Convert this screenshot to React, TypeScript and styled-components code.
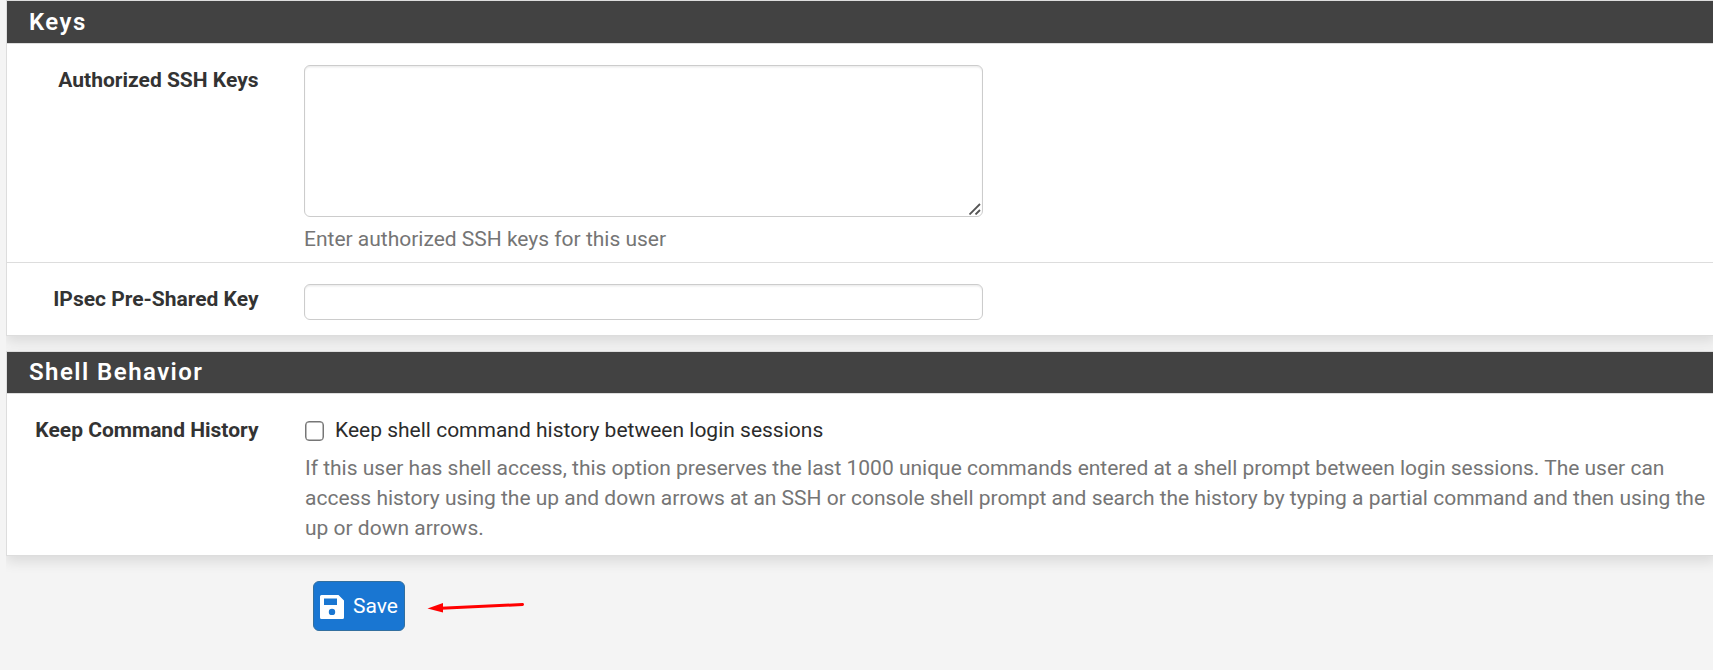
import React from "react";
import styled, { createGlobalStyle } from "styled-components";

const GlobalStyle = createGlobalStyle`
  * { box-sizing: border-box; }
  html { background: #f4f4f4; overflow: hidden; }
  body {
    margin: 0;
    height: 670px;
    overflow: hidden;
    background: #f4f4f4;
    color: #2b2b2b;
    font: 400 21px/30px Roboto, "Liberation Sans", sans-serif;
  }
`;

const Page = styled.main`
  width: 1710px;
  height: 670px;
  margin-left: 6px;
  overflow: hidden;
`;

const Panel = styled.section<{ $height: number }>`
  height: ${(p) => p.$height}px;
  margin-bottom: 15px;
  background: #fff;
  border: 1px solid #ddd;
  box-shadow: 0 6px 12px rgba(0, 0, 0, 0.1);
`;

const PanelTitle = styled.h2<{ $height: number; $lineHeight: number }>`
  height: ${(p) => p.$height}px;
  margin: 0;
  padding-left: 22px;
  background: #424242;
  border-bottom: 1px solid #ddd;
  color: #fff;
  font-size: 24px;
  font-weight: 600;
  line-height: ${(p) => p.$lineHeight}px;
  letter-spacing: 1.45px;
`;

const FormRow = styled.div<{ $height?: number }>`
  display: flex;
  height: ${(p) => (p.$height ? `${p.$height}px` : "auto")};
  padding-top: 21px;
  & + & { border-top: 1px solid #ddd; }
`;

const Label = styled.label`
  flex: 0 0 251.5px;
  text-align: right;
  font-weight: 700;
  color: #333;
`;

const Field = styled.div`
  margin-left: 45.5px;
`;

const TextArea = styled.textarea`
  display: block;
  width: 679px;
  height: 152px;
  padding: 9px 18px;
  border: 1px solid #ccc;
  border-radius: 6px;
  box-shadow: inset 0 1.5px 1.5px rgba(0, 0, 0, 0.075);
  resize: none;
  outline: none;
  font: inherit;
`;

const TextAreaWrap = styled.div`
  position: relative;
  width: 679px;
`;

const Grip = styled.svg`
  position: absolute;
  right: 2px;
  bottom: 2px;
`;

const TextInput = styled.input`
  display: block;
  width: 679px;
  height: 36px;
  padding: 0 18px;
  border: 1px solid #ccc;
  border-radius: 6px;
  box-shadow: inset 0 1.5px 1.5px rgba(0, 0, 0, 0.075);
  outline: none;
  font: inherit;
`;

const Help = styled.p<{ $top: number; $indent?: number }>`
  margin: ${(p) => p.$top}px 0 0 ${(p) => p.$indent ?? 0}px;
  color: #757575;
  letter-spacing: -0.007px;
  white-space: nowrap;
`;

const CheckLine = styled.label`
  display: flex;
  align-items: center;
  height: 30px;
`;

const Checkbox = styled.input`
  appearance: none;
  width: 19px;
  height: 20px;
  margin: 2px 11px 0 1px;
  border: 1px solid #767676;
  border-radius: 4px;
  background: #fff;
  box-shadow: inset 0 0 0 0.5px #767676;
`;

const Actions = styled.div`
  display: flex;
  padding: 10px 0 0 307px;
`;

const SaveButton = styled.button`
  display: flex;
  align-items: center;
  width: 92px;
  height: 50px;
  padding: 0 0 0 6px;
  border: 1px solid #326f9f;
  border-radius: 6px;
  background: #1976d2;
  color: #fff;
  font: 400 21px/30px Roboto, "Liberation Sans", sans-serif;
  svg { margin: 1px 9px 0 0; flex: none; }
`;

const Arrow = styled.svg`
  margin: 17px 0 0 22px;
`;

export default function App() {
  return (
    <>
      <GlobalStyle />
      <Page>
        <Panel $height={336}>
          <PanelTitle $height={43} $lineHeight={43}>Keys</PanelTitle>
          <FormRow $height={218}>
            <Label htmlFor="ssh">Authorized SSH Keys</Label>
            <Field>
              <TextAreaWrap>
                <TextArea id="ssh" />
                <Grip width="12" height="12" viewBox="0 0 12 12" stroke="#555" strokeWidth="1.8">
                  <path d="M.5 11.5 11 1M6.5 11.5 11 7" />
                </Grip>
              </TextAreaWrap>
              <Help $top={7}>Enter authorized SSH keys for this user</Help>
            </Field>
          </FormRow>
          <FormRow>
            <Label htmlFor="psk">IPsec Pre-Shared Key</Label>
            <Field>
              <TextInput id="psk" />
            </Field>
          </FormRow>
        </Panel>
        <Panel $height={205}>
          <PanelTitle $height={42} $lineHeight={41}>Shell Behavior</PanelTitle>
          <FormRow>
            <Label htmlFor="history">Keep Command History</Label>
            <Field>
              <CheckLine>
                <Checkbox type="checkbox" id="history" />
                Keep shell command history between login sessions
              </CheckLine>
              <Help $top={8} $indent={1}>
                If this user has shell access, this option preserves the last 1000 unique commands entered at a shell prompt between login sessions. The user can
                <br />
                access history using the up and down arrows at an SSH or console shell prompt and search the history by typing a partial command and then using the
                <br />
                up or down arrows.
              </Help>
            </Field>
          </FormRow>
        </Panel>
        <Actions>
          <SaveButton type="button">
            <svg width="24" height="24" viewBox="0 0 24 24">
              <path
                fill="#fff"
                fillRule="evenodd"
                d="M1.5 0H18.5L24 5.5V22.5Q24 24 22.5 24H1.5Q0 24 0 22.5V1.5Q0 0 1.5 0ZM4 3.5V10H17V3.5ZM12 13.7a3.2 3.2 0 1 0 0 6.4a3.2 3.2 0 0 0 0-6.4Z"
              />
            </svg>
            Save
          </SaveButton>
          <Arrow width="100" height="20" viewBox="0 0 100 20">
            <path d="M14 10.3 95.5 6.5" stroke="#f00" strokeWidth="3" strokeLinecap="round" />
            <path d="M.5 10.5 16 5V14.5Z" fill="#f00" />
          </Arrow>
        </Actions>
      </Page>
    </>
  );
}
